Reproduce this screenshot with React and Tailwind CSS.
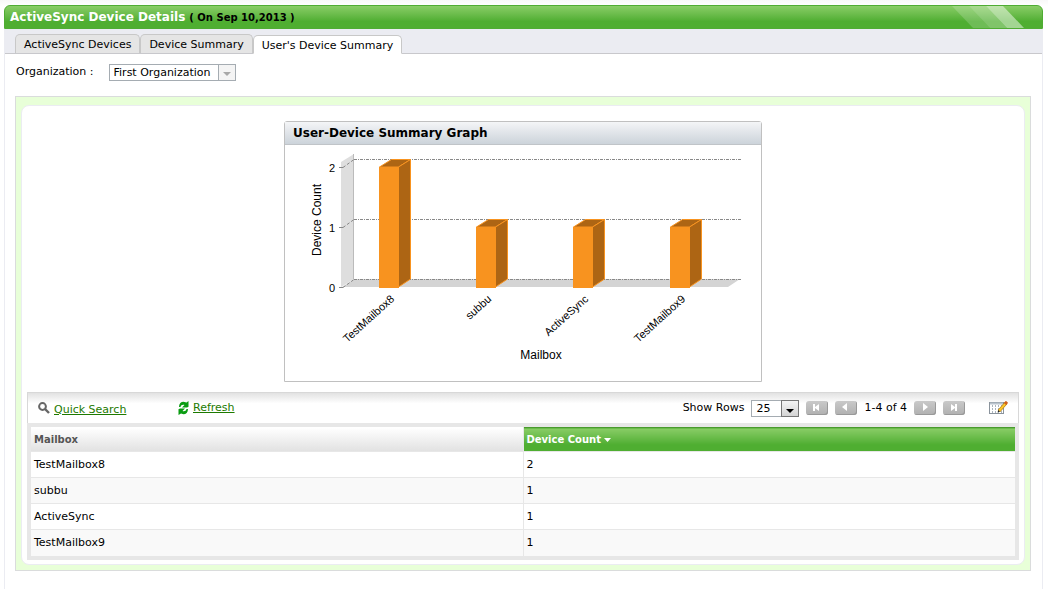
import React from 'react';

const tabs = ['ActiveSync Devices', 'Device Summary', "User's Device Summary"];

const rows = [
  { mailbox: 'TestMailbox8', count: 2 },
  { mailbox: 'subbu', count: 1 },
  { mailbox: 'ActiveSync', count: 1 },
  { mailbox: 'TestMailbox9', count: 1 },
];

const pagerIcons = {
  First: 'M7 3h2v3l4-3v7L9 7v3H7z',
  Previous: 'M12 2v8L7 6z',
  Next: 'M9 2v8l5-4z',
  Last: 'M8 3l4 3V3h2v7h-2V7l-4 3z',
};

function Header() {
  return (
    <div className="flex h-6 items-center justify-between overflow-hidden rounded-t-md border border-[#4fac33] bg-linear-to-b from-[#89cd66] to-[#4fae31] to-70% pl-[5px]">
      <h1 className="text-[12px] font-bold text-white">
        ActiveSync Device Details
        <span className="ml-1 text-[10px] text-black">( On Sep 10,2013 )</span>
      </h1>
      <svg className="mr-4 h-[22px] w-[74px]" viewBox="0 0 74 22" aria-hidden="true">
        <polygon points="0,0 17,0 38,22 21,22" fill="#fff" opacity="0.18" />
        <polygon points="17,0 34,0 55,22 38,22" fill="#fff" opacity="0.28" />
        <polygon points="34,0 51,0 72,22 55,22" fill="#fff" opacity="0.48" />
      </svg>
    </div>
  );
}

function Tabs() {
  return (
    <div className="flex h-[25px] items-end border-b border-[#c8c8cc] bg-[#ebecf2] pl-[10px]">
      {tabs.map((tab, i) => (
        <button
          key={tab}
          type="button"
          className={`h-[19px] whitespace-nowrap rounded-t-[5px] border px-2 text-[11px] leading-[19px] ${
            i === 2 ? '-mb-px border-[#c8c8c8] border-b-white bg-white' : 'border-b-0 border-[#c8c8c8] bg-[#e5e5e5]'
          }`}
        >
          {tab}
        </button>
      ))}
    </div>
  );
}

function Bar({ x, value }) {
  const top = 142 - value * 60;
  return (
    <g stroke="#f8931f">
      <polygon points={`${x},${top} ${x + 12},${top - 7.5} ${x + 31},${top - 7.5} ${x + 19},${top}`} fill="#ad6514" />
      <polygon points={`${x + 19},${top} ${x + 31},${top - 7.5} ${x + 31},134 ${x + 19},142`} fill="#ad6514" />
      <rect x={x} y={top + 0.5} width="19" height={142 - top} fill="#f8931f" />
    </g>
  );
}

function SummaryGraph() {
  return (
    <section className="mx-auto max-w-[478px] rounded-t-[3px] border border-[#c0c0c0]">
      <h2 className="border-b border-[#c0c4c8] bg-linear-to-b from-[#f4f5f7] to-[#ccd3da] px-2 text-[12px] font-bold leading-[22px]">
        User-Device Summary Graph
      </h2>
      <svg viewBox="0 0 476 236" className="block w-full font-['Liberation_Sans',sans-serif]" role="img" aria-label="Device count per mailbox">
        {/* wall and floor */}
        <polygon points="56,17 69,9 69,134 56,142" fill="#dedede" />
        <path d="M68.5 9V134" stroke="#bbb" />
        <polygon points="57,142 69,134 455,134 443,142" fill="#d4d4d4" />

        {/* grid lines */}
        {[2, 1, 0].map((n) => (
          <g key={n} stroke="#888" fill="none">
            <path d={`M54 ${142.5 - n * 60}h4`} />
            <path d={`M58 ${142.5 - n * 60}L69 ${134.5 - n * 60}`} strokeDasharray="3 2" />
            <path d={`M69 ${134.5 - n * 60}H456`} strokeDasharray="3 1 1 1" />
            <text x="50" y={147 - n * 60} fontSize="11" textAnchor="end" fill="#000" stroke="none">
              {n}
            </text>
          </g>
        ))}

        {rows.map((row, i) => (
          <g key={row.mailbox}>
            <Bar x={94.5 + i * 97} value={row.count} />
            <text
              transform={`translate(${110 + i * 97} 155) rotate(-42)`}
              fontSize="11"
              textAnchor="end"
            >
              {row.mailbox}
            </text>
          </g>
        ))}

        <text transform="translate(36 75) rotate(-90)" fontSize="12" textAnchor="middle">
          Device Count
        </text>
        <text x="256" y="214" fontSize="12" textAnchor="middle">
          Mailbox
        </text>
      </svg>
    </section>
  );
}

function PagerButton({ label }) {
  return (
    <button
      type="button"
      aria-label={label}
      className="h-[14px] w-[22px] rounded-[3px] bg-linear-to-b from-[#c9c9c9] to-[#b0b0b0] shadow-[inset_-1px_-1px_0_#999]"
    >
      <svg viewBox="0 0 22 14" className="block h-[14px] w-[22px]" fill="#fff" aria-hidden="true">
        <path d={pagerIcons[label]} />
      </svg>
    </button>
  );
}

function Toolbar() {
  return (
    <div className="flex h-[31px] items-center justify-between border border-b-0 border-[#d8d8d8] bg-linear-to-b from-[#e2e2e2] to-white to-35% px-[10px] text-[11px]">
      <div className="flex items-center">
        <a href="#search" className="flex w-[140px] items-center gap-1 text-[#1d7a00]">
          <svg viewBox="0 0 12 12" className="h-3 w-3 shrink-0" fill="none" stroke="#666" strokeWidth="2" aria-hidden="true">
            <circle cx="4.5" cy="4.5" r="3.4" />
            <path d="M7 7l4 4" strokeWidth="2.4" />
          </svg>
          <span className="pt-1 underline">Quick Search</span>
        </a>
        <a href="#refresh" className="flex items-center gap-1 text-[#1d7a00]">
          <svg viewBox="0 0 11 14" className="h-[14px] w-[11px]" fill="#0a9c12" aria-hidden="true">
            <path d="M1 6C1 2.500 3 .8 5.500 .8L8.500 1.500 10.500 0V5.800L9 6.500H4L6.500 4C4.500 3.500 3 4 2.500 6z" />
            <path d="M10 8c0 3.500-2 5.200-4.500 5.200L3 12.500 .5 14V8.200L2 7.500h5L4.500 10C6.500 10.500 8 10 8.500 8z" />
          </svg>
          <span className="underline">Refresh</span>
        </a>
      </div>

      <div className="flex items-center gap-[7px]">
        <label htmlFor="rows">Show Rows</label>
        <div className="relative">
          <select
            id="rows"
            defaultValue="25"
            className="block h-[17px] w-12 appearance-none border border-[#a5acb2] bg-white pl-1 text-[11px] leading-[15px]"
          >
            <option>25</option>
            <option>50</option>
            <option>100</option>
          </select>
          <span className="pointer-events-none absolute right-0 top-0 flex h-[17px] w-[18px] items-end justify-center border border-[#777] bg-linear-to-b from-[#f4f4f4] to-[#d4d4d4] pb-[3px]">
            <svg viewBox="0 0 8 4" className="h-1 w-2" aria-hidden="true">
              <path d="M0 0h8L4 4z" />
            </svg>
          </span>
        </div>
        <PagerButton label="First" />
        <PagerButton label="Previous" />
        <span>1-4 of 4</span>
        <PagerButton label="Next" />
        <PagerButton label="Last" />
        <button type="button" aria-label="Edit columns" className="ml-[17px]">
          <svg viewBox="0 0 19 14" className="block h-[14px] w-[19px]" aria-hidden="true">
            <rect x="0.5" y="1.5" width="14" height="11" fill="#fff" stroke="#8a939c" />
            <path d="M1 2.5h13" stroke="#b9c3cc" strokeWidth="2" />
            <path d="M3.5 4v8M6.5 4v8M9.5 4v8M12.5 4v8" stroke="#aab4bd" strokeDasharray="2 1" />
            <path d="M10 10L17 2" stroke="#a87413" strokeWidth="3.4" />
            <path d="M10 10L17 2" stroke="#fcc62a" strokeWidth="2" />
            <path d="M16 3L18 .8" stroke="#d0601a" strokeWidth="3" />
            <path d="M8.5 11.5l.8-2.5 1.7 1.5z" fill="#222" />
          </svg>
        </button>
      </div>
    </div>
  );
}

function DeviceTable() {
  return (
    <div className="border-4 border-[#e7e7e7]">
      <table className="w-full table-fixed border-collapse text-left text-[11px]">
        <thead>
          <tr className="h-6 text-[10px]">
            <th className="border-r border-[#e7e7e7] bg-linear-to-b from-white to-[#e2e2e2] px-[3px] text-[#555]">Mailbox</th>
            <th className="border-t border-[#4a9a2e] bg-linear-to-b from-[#89cd66] to-[#4fae31] to-70% px-[3px] text-white">
              <span className="flex items-center gap-[3px]">
                Device Count
                <svg viewBox="0 0 7 4" className="h-1 w-[7px]" fill="#fff" aria-hidden="true">
                  <path d="M0 0h7L3.5 4z" />
                </svg>
              </span>
            </th>
          </tr>
        </thead>
        <tbody>
          {rows.map((row) => (
            <tr key={row.mailbox} className="h-[26px] border-t border-[#e7e7e7] even:bg-[#f9f9f9]">
              <td className="border-r border-[#e7e7e7] px-[3px] pt-px">{row.mailbox}</td>
              <td className="px-[3px] pt-px">{row.count}</td>
            </tr>
          ))}
        </tbody>
      </table>
    </div>
  );
}

export default function App() {
  return (
    <div className="min-h-screen bg-linear-to-b from-[#f8f8f8] to-white to-[6px] pl-1 pr-[5px] pt-[5px] font-['DejaVu_Sans',sans-serif] text-black">
      <Header />
      <main className="min-h-[560px] border-x border-[#ebecf2]">
        <Tabs />
        <div className="flex items-center gap-[15px] px-[11px] pt-[9px] text-[11px]">
          <label htmlFor="organization" className="leading-[18px]">Organization :</label>
          <div className="relative">
            <select
              id="organization"
              className="block h-[17px] w-[127px] appearance-none border border-[#a5acb2] bg-white pl-1 text-[11px] leading-[15px]"
            >
              <option>First Organization</option>
            </select>
            <span className="pointer-events-none absolute right-0 top-0 flex h-[17px] w-[18px] items-end justify-center border border-[#a5acb2] bg-[#f4f4f4] pb-1">
              <svg viewBox="0 0 8 4" className="h-1 w-2" fill="#a8a8a8" aria-hidden="true">
                <path d="M0 0h8L4 4z" />
              </svg>
            </span>
          </div>
        </div>

        <div className="ml-[10px] mr-[11px] mt-[15px] border border-[#dadcdc] bg-[#e8ffd8] px-[5px] pb-[5px] pt-2">
          <div className="rounded-lg border border-[#ebecf2] bg-white px-[5px] pb-1 pt-[15px]">
            <SummaryGraph />
            <div className="mt-[10px]">
              <Toolbar />
              <DeviceTable />
            </div>
          </div>
        </div>
      </main>
    </div>
  );
}
